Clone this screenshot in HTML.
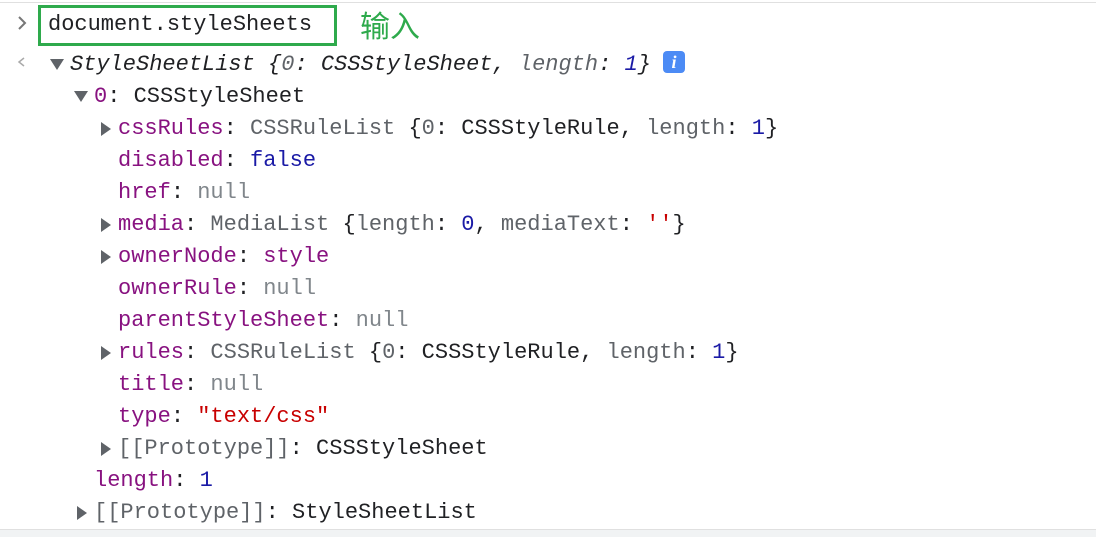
<!DOCTYPE html><html><head><meta charset="utf-8"><style>
body{margin:0;width:1096px;height:536px;background:#fff;overflow:hidden;position:relative;font-family:"Liberation Mono",monospace;font-size:22px;color:#202124}
.r{position:absolute;height:32px;line-height:32px;white-space:pre;margin-top:2px}
.k{color:#881280}.g{color:#5f6368}.n{color:#1a1aa6}.nl{color:#80868b}.s{color:#c80000}.i{font-style:italic}
.t{position:absolute;width:0;height:0;border-top:7px solid transparent;border-bottom:7px solid transparent;border-left:10px solid #5f6368;margin-top:1px}
.d{position:absolute;width:0;height:0;border-left:7px solid transparent;border-right:7px solid transparent;border-top:11px solid #5f6368;margin-top:1px}
</style></head><body>
<div style="position:absolute;left:0;top:2px;width:1096px;height:1px;background:#e0e0e0"></div>
<div style="position:absolute;left:0;top:529px;width:1096px;height:7px;background:#f1f3f4;border-top:1px solid #e0e0e0"></div>
<svg style="position:absolute;left:17px;top:16px" width="10" height="14"><path d="M2 1L8 7L2 13" fill="none" stroke="#777" stroke-width="2"/></svg>
<div style="position:absolute;left:38px;top:5px;width:293px;height:35px;border:3px solid #2eaa4c"></div>
<div class="r" style="left:48px;top:7px">document.styleSheets</div>
<div class="r" style="left:360px;top:2px;font-family:'Noto Sans CJK SC',sans-serif;font-size:30px;line-height:40px;color:#2eaa4c">输入</div>
<svg style="position:absolute;left:15px;top:56px" width="12" height="12"><path d="M9 2L4 6L9 10" fill="none" stroke="#aaa" stroke-width="1.5"/></svg>
<div class="d" style="left:50px;top:58px"></div>
<div class="r i" style="left:70px;top:47px">StyleSheetList {<span class="g">0</span>: CSSStyleSheet, <span class="g">length</span>: <span class="n">1</span>}</div>
<div style="position:absolute;left:663px;top:51px;width:22px;height:22px;border-radius:4px;background:#4c8bf5;color:#fff;font-family:'Liberation Serif',serif;font-style:italic;font-weight:bold;font-size:18px;line-height:22px;text-align:center">i</div>
<div class="d" style="left:74px;top:90px"></div>
<div class="r" style="left:94px;top:79px"><span class="k">0</span>: CSSStyleSheet</div>
<div class="t" style="left:101px;top:121px"></div>
<div class="r" style="left:118px;top:111px"><span class="k">cssRules</span>: <span class="g">CSSRuleList</span> {<span class="g">0</span>: CSSStyleRule, <span class="g">length</span>: <span class="n">1</span>}</div>
<div class="r" style="left:118px;top:143px"><span class="k">disabled</span>: <span class="n">false</span></div>
<div class="r" style="left:118px;top:175px"><span class="k">href</span>: <span class="nl">null</span></div>
<div class="t" style="left:101px;top:217px"></div>
<div class="r" style="left:118px;top:207px"><span class="k">media</span>: <span class="g">MediaList</span> {<span class="g">length</span>: <span class="n">0</span>, <span class="g">mediaText</span>: <span class="s">''</span>}</div>
<div class="t" style="left:101px;top:249px"></div>
<div class="r" style="left:118px;top:239px"><span class="k">ownerNode</span>: <span class="k">style</span></div>
<div class="r" style="left:118px;top:271px"><span class="k">ownerRule</span>: <span class="nl">null</span></div>
<div class="r" style="left:118px;top:303px"><span class="k">parentStyleSheet</span>: <span class="nl">null</span></div>
<div class="t" style="left:101px;top:345px"></div>
<div class="r" style="left:118px;top:335px"><span class="k">rules</span>: <span class="g">CSSRuleList</span> {<span class="g">0</span>: CSSStyleRule, <span class="g">length</span>: <span class="n">1</span>}</div>
<div class="r" style="left:118px;top:367px"><span class="k">title</span>: <span class="nl">null</span></div>
<div class="r" style="left:118px;top:399px"><span class="k">type</span>: <span class="s">"text/css"</span></div>
<div class="t" style="left:101px;top:441px"></div>
<div class="r" style="left:118px;top:431px"><span class="g">[[Prototype]]</span>: CSSStyleSheet</div>
<div class="r" style="left:94px;top:463px"><span class="k">length</span>: <span class="n">1</span></div>
<div class="t" style="left:77px;top:505px"></div>
<div class="r" style="left:94px;top:495px"><span class="g">[[Prototype]]</span>: StyleSheetList</div>
</body></html>
